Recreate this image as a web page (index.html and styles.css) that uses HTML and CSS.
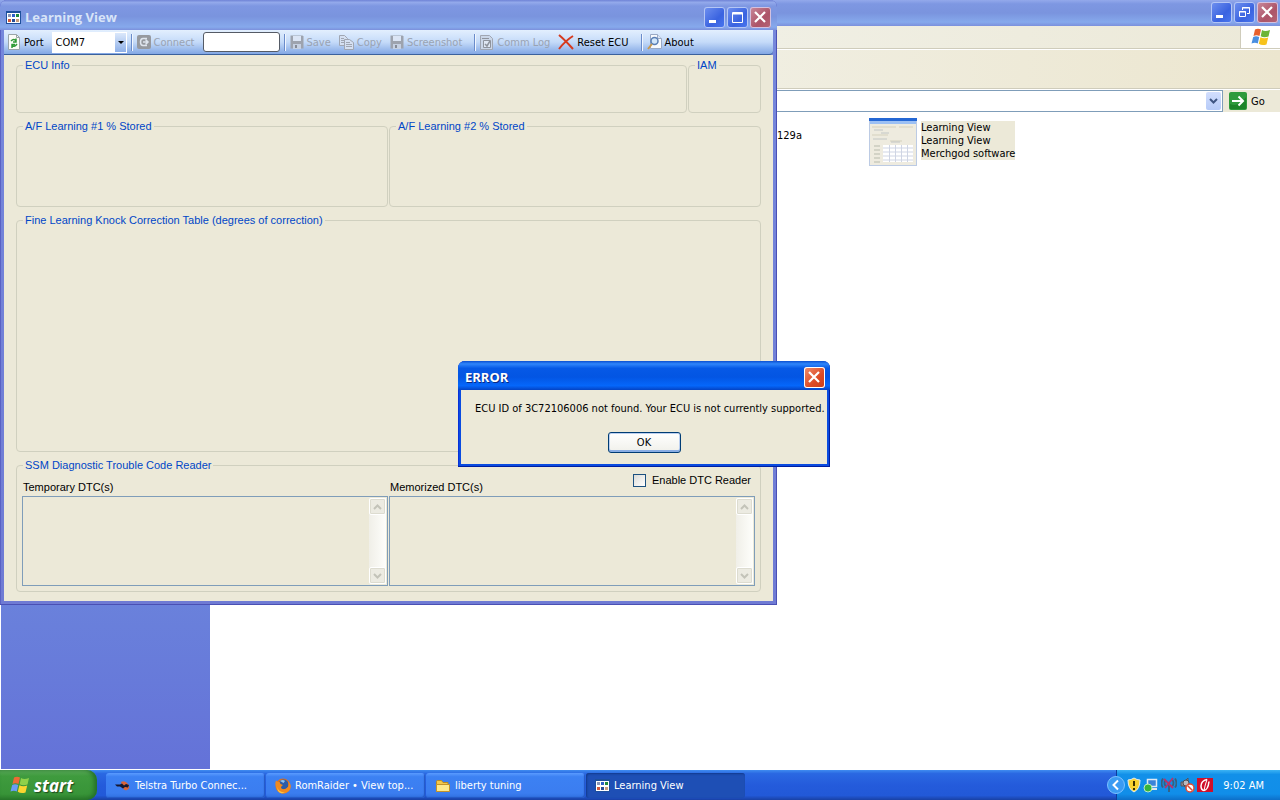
FILE: index.html
```html
<!DOCTYPE html>
<html lang="en">
<head>
  <meta charset="UTF-8">
  <title>Learning View</title>
  <link rel="stylesheet" href="styles.css">
</head>
<body>

  <div class="desktop">

    <!-- explorer window in the back -->
    <div class="explorer">
      <div class="explorer-title">
        <div class="win-buttons">
          <button type="button" class="win-btn" aria-label="Minimize">
            <svg width="21" height="21" viewBox="0 0 21 21"><path d="M5 13h7v3H5z" fill="#fff"/></svg>
          </button>
          <button type="button" class="win-btn" aria-label="Restore">
            <svg width="21" height="21" viewBox="0 0 21 21" fill="none" stroke="#fff"><path d="M8.500 8V5.500h7v6H13M8 6h8"/><path d="M5.500 9.500h6v5h-6zM5 10h7"/></svg>
          </button>
          <button type="button" class="win-btn close-dim" aria-label="Close">
            <svg width="21" height="21" viewBox="0 0 21 21"><path d="M5 5l10 10M15 5L5 15" stroke="#fff" stroke-width="2.200"/></svg>
          </button>
        </div>
      </div>
      <div class="menu-bar">
        <div class="throbber">
          <svg width="20" height="18" viewBox="0 0 20 18">
            <path d="M4 1.500Q7 0 10 1.500L8.500 8Q5.500 6.500 2.500 8z" fill="#e8602c"/>
            <path d="M11 2Q14 4 19 2L17.500 8.500Q13 10 9.700 8.200z" fill="#6bb536"/>
            <path d="M2.200 9Q5 7.500 8.200 9L6.800 15.500Q4 14 .5 15.500z" fill="#4a8fe0"/>
            <path d="M9.400 9.300Q13 11 17.200 9.600L15.500 16.500Q11 18 7.800 15.800z" fill="#f7c31c"/>
          </svg>
        </div>
      </div>
      <div class="tool-bar"></div>
      <div class="address-bar">
        <div class="address-field">
          <input type="text" class="address-input" aria-label="Address">
          <button type="button" class="address-drop" aria-label="Show addresses">
            <svg width="9" height="6" viewBox="0 0 9 6"><path d="M1 1l3.500 3.500L8 1" fill="none" stroke="#3f5683" stroke-width="2"/></svg>
          </button>
        </div>
        <button type="button" class="go-btn">
          <svg width="18" height="18" viewBox="0 0 18 18"><rect width="18" height="18" rx="2" fill="#2f9a3c"/><path d="M1 17V12Q9 16 17 5v12z" fill="#1d8429"/><path d="M3 9h11M9.500 4.500L14 9l-4.500 4.500" fill="none" stroke="#fff" stroke-width="2"/></svg>
          Go
        </button>
      </div>
      <div class="explorer-body">
        <div class="task-pane"></div>
        <div class="files">
          <p class="file-name">129a</p>
          <a href="#" class="file-tile">
            <svg width="48" height="48" viewBox="0 0 48 48">
              <rect width="48" height="48" fill="#bccbe4"/>
              <rect x="1" y="3" width="46" height="44" fill="#eeebdf"/>
              <rect width="48" height="3" fill="#2467d4"/>
              <rect x="1" y="3" width="46" height="3" fill="#9cc0f4"/>
              <path d="M3 9h24M30 9h14M3 17h16M21 23h12" stroke="#d5d1bd"/>
              <path d="M5 12h9M12 15h8M4 21h14M22 24h9" stroke="#c2c6c5"/>
              <rect x="14" y="27" width="30" height="17" fill="#fff"/>
              <path d="M14 30h30M14 34h30M14 38h30M14 42h30M20.500 27v17M26.500 27v17M32.500 27v17M38.500 27v17" stroke="#cfd5e4"/>
              <path d="M5 28h6M5 32h6M5 36h6M5 40h6M5 44h6" stroke="#d3d3c6" stroke-width="2"/>
            </svg>
            <span class="file-text">Learning View<br>Learning View<br>Merchgod software</span>
          </a>
        </div>
      </div>
    </div>

    <!-- taskbar -->
    <div class="taskbar">
      <button type="button" class="start-btn">
        <svg width="20" height="18" viewBox="0 0 20 18">
          <path d="M4 1.500Q7 0 10 1.500L8.500 8Q5.500 6.500 2.500 8z" fill="#ee6a35"/>
          <path d="M11 2Q14 4 19 2L17.500 8.500Q13 10 9.700 8.200z" fill="#8fd14a"/>
          <path d="M2.200 9Q5 7.500 8.200 9L6.800 15.500Q4 14 .5 15.500z" fill="#6a9cf5"/>
          <path d="M9.400 9.300Q13 11 17.200 9.600L15.500 16.500Q11 18 7.800 15.800z" fill="#fbd530"/>
        </svg>
        start
      </button>
      <div class="tasks">
        <button type="button" class="task">
          <svg width="16" height="16" viewBox="0 0 16 16"><path d="M6 4Q10 2 13 6T12 12Q9 13 8 10z" fill="#d9653a"/><path d="M0 6.500h5l2-1 2 2 2-1.500 3 1-1 2.500-3-.5-2 1.500-3-2H2z" fill="#16172e"/></svg>
          Telstra Turbo Connec...
        </button>
        <button type="button" class="task">
          <svg width="16" height="16" viewBox="0 0 16 16"><circle cx="8" cy="8" r="7.500" fill="#e0701c"/><circle cx="8.500" cy="6.500" r="5" fill="#2c5ca8"/><path d="M5 3q3-2 5 0L8.500 5z" fill="#8fc3ee"/><path d="M1 2.500Q2 4 5 4q-1 2 3 3-2 1-2 3 3 3 7-1 1-3 0-6 5 5 1 10-6 5-11 0-4-5-2-10.500z" fill="#ef8a20"/><path d="M2 9q2 6 8 5-4 3-7-1z" fill="#fcc544"/></svg>
          RomRaider • View top...
        </button>
        <button type="button" class="task">
          <svg width="16" height="16" viewBox="0 0 16 16"><path d="M1.500 13.500v-10q0-1 1-1h4l1.500 2h5v9z" fill="#f2c84b" stroke="#b98a22"/><path d="M1.500 13.500v-7h13v7z" fill="#fde98c" stroke="#c1922b"/></svg>
          liberty tuning
        </button>
        <button type="button" class="task active">
          <svg width="15" height="13" viewBox="0 0 15 13"><path d="M0 0h15v13H0z" fill="#1d4f9c"/><path d="M1 2h13v10H1z" fill="#fff"/><path d="M2 3h3v3H2z" fill="#8a96b8"/><path d="M6 3h3v3H6z" fill="#2e5fc8"/><path d="M10 3h3v3h-3z" fill="#1e8a3c"/><path d="M2 8h3v3H2z" fill="#d0583c"/><path d="M6 8h3v3H6z" fill="#274b94"/><path d="M10 8h3v3h-3z" fill="#c79c7c"/></svg>
          Learning View
        </button>
      </div>
      <div class="tray">
        <button type="button" class="tray-toggle" aria-label="Show hidden icons">
          <svg width="18" height="18" viewBox="0 0 18 18"><circle cx="9" cy="9" r="8.500" fill="#3a9bf3" stroke="#7cc2ff"/><path d="M11 4.500L6.500 9l4.500 4.500" fill="none" stroke="#fff" stroke-width="2"/></svg>
        </button>
        <svg width="14" height="16" viewBox="0 0 14 16"><path d="M7 1q3 2 6 2 0 9-6 12Q1 12 1 3q3 0 6-2z" fill="#f8d230" stroke="#e8edf0"/><path d="M7 4v5M7 11v2" stroke="#3a3000" stroke-width="2"/></svg>
        <svg width="16" height="16" viewBox="0 0 16 16"><rect x="4.500" y="2.500" width="9" height="7" fill="#3b83d8" stroke="#dfe9f5" stroke-width="1.500"/><path d="M8 12h6" stroke="#e3e6ea" stroke-width="2"/><circle cx="5" cy="11" r="4" fill="#37b43c" stroke="#bcebbd"/></svg>
        <svg width="16" height="16" viewBox="0 0 16 16" fill="none"><path d="M8 6v9M4.500 3q-2 3 0 6M11.500 3q2 3 0 6M2 1.500q-3 5 0 9M14 1.500q3 5 0 9" stroke="#3a5f7c" stroke-width="1.800"/><path d="M3 2l9 9M12 1L4 11" stroke="#b8326a" stroke-width="1.800"/></svg>
        <svg width="16" height="16" viewBox="0 0 16 16"><path d="M2 5h3l4-4v11L5 9H2z" fill="#8c8c94" stroke="#545460"/><circle cx="7" cy="6" r="3" fill="#bababf" stroke="#4d4d52"/><circle cx="11" cy="11" r="4" fill="#fff" stroke="#de4a34" stroke-width="1.500"/><path d="M8.500 8.500l5 5" stroke="#de4a34" stroke-width="1.500"/></svg>
        <svg width="16" height="14" viewBox="0 0 16 14"><rect width="16" height="14" fill="#d00f2a"/><path d="M10 1.500Q4 3 4 8q0 4 3 4.500Q11 12 12 3.500" fill="none" stroke="#fff" stroke-width="1.500"/><path d="M10 1.500Q8 7 7 12.500" fill="none" stroke="#fff"/></svg>
        <span class="clock">9:02 AM</span>
      </div>
    </div>

    <!-- main application window -->
    <div class="app-window">
      <div class="app-title">
        <svg width="15" height="13" viewBox="0 0 15 13"><path d="M0 0h15v13H0z" fill="#1d4f9c"/><path d="M1 2h13v10H1z" fill="#fff"/><path d="M2 3h3v3H2z" fill="#8a96b8"/><path d="M6 3h3v3H6z" fill="#2e5fc8"/><path d="M10 3h3v3h-3z" fill="#1e8a3c"/><path d="M2 8h3v3H2z" fill="#d0583c"/><path d="M6 8h3v3H6z" fill="#274b94"/><path d="M10 8h3v3h-3z" fill="#c79c7c"/></svg>
        <h1 class="app-name">Learning View</h1>
        <div class="win-buttons">
          <button type="button" class="win-btn" aria-label="Minimize">
            <svg width="21" height="21" viewBox="0 0 21 21"><path d="M5 13h7v3H5z" fill="#fff"/></svg>
          </button>
          <button type="button" class="win-btn" aria-label="Maximize">
            <svg width="21" height="21" viewBox="0 0 21 21" fill="none" stroke="#fff"><path d="M5.500 5.500h10v10h-10zM5 6.500h11M5 7h11"/></svg>
          </button>
          <button type="button" class="win-btn close-dim" aria-label="Close">
            <svg width="21" height="21" viewBox="0 0 21 21"><path d="M5 5l10 10M15 5L5 15" stroke="#fff" stroke-width="2.200"/></svg>
          </button>
        </div>
      </div>

      <div class="strip">
        <label class="strip-item" for="port">
          <svg width="14" height="16" viewBox="0 0 14 16"><path d="M1.500.5h8l3 3v12h-11z" fill="#fbfcf8" stroke="#9aa5a8"/><path d="M9.500.5v3h3" fill="none" stroke="#9aa5a8"/><path d="M4 7q3-3 5 0M9 4.500V8H6M10 10q-3 4-5 1M5 14v-3.500h3" fill="none" stroke="#2e9a35" stroke-width="1.500"/></svg>
          Port
        </label>
        <div class="combo">
          <select id="port" class="combo-select">
            <option>COM7</option>
          </select>
          <span class="combo-arrow"></span>
        </div>
        <span class="sep"></span>
        <button type="button" class="strip-item" disabled>
          <svg width="14" height="14" viewBox="0 0 14 14"><rect width="14" height="14" rx="2" fill="#96999f"/><path d="M10 3.500H6Q3.500 3.500 3.500 7T6 10.500h4" fill="none" stroke="#dfe5ee" stroke-width="1.500"/><path d="M6 7h4M8.500 4.500L11 7 8.500 9.500" fill="none" stroke="#dfe5ee" stroke-width="1.500"/></svg>
          Connect
        </button>
        <input type="text" class="strip-input" aria-label="Connection status">
        <span class="sep"></span>
        <button type="button" class="strip-item" disabled>
          <svg width="14" height="14" viewBox="0 0 14 14"><path d="M.5.5h12l1 1v12H.5z" fill="#9da3ae"/><path d="M3 1h8v5H3z" fill="#dbe5f5"/><path d="M3 9h8v5H3z" fill="#c5d0e2"/><path d="M5 10h2v3H5z" fill="#858b96"/></svg>
          Save
        </button>
        <button type="button" class="strip-item" disabled>
          <svg width="15" height="15" viewBox="0 0 15 15"><path d="M.5.5h5l3 3v7h-8z" fill="#d5e0f2" stroke="#a0a6b2"/><path d="M5.500 4.500h5l4 3v7h-9z" fill="#d5e0f2" stroke="#a0a6b2"/><path d="M2 3.500h3M2 5.500h3M2 7.500h3M7 7.500h4M7 9.500h6M7 11.500h6" stroke="#a0a6b2"/></svg>
          Copy
        </button>
        <button type="button" class="strip-item" disabled>
          <svg width="14" height="14" viewBox="0 0 14 14"><path d="M.5.5h12l1 1v12H.5z" fill="#9da3ae"/><path d="M3 1h8v5H3z" fill="#dbe5f5"/><path d="M3 9h8v5H3z" fill="#c5d0e2"/><path d="M5 10h2v3H5z" fill="#858b96"/></svg>
          Screenshot
        </button>
        <span class="sep"></span>
        <button type="button" class="strip-item" disabled>
          <svg width="14" height="15" viewBox="0 0 14 15"><path d="M.5.5h9l3 3v11H.5z" fill="#cad6e8" stroke="#a0a6b2"/><path d="M3.500 5.500h7v7h-7z" fill="#dfe7f3" stroke="#8e939d"/><path d="M5 9l2 2 3-5" fill="none" stroke="#8e939d" stroke-width="1.500"/><path d="M2 3.500h7" stroke="#8e939d"/></svg>
          Comm Log
        </button>
        <button type="button" class="strip-item">
          <svg width="16" height="16" viewBox="0 0 16 16"><path d="M1 1q6 5 14 14M15 2Q7 7 1 15" fill="none" stroke="#d63a1e" stroke-width="2"/></svg>
          Reset ECU
        </button>
        <span class="sep"></span>
        <button type="button" class="strip-item">
          <svg width="15" height="16" viewBox="0 0 15 16"><path d="M3.500.5h7l4 4v10h-11z" fill="#f8fafd" stroke="#9aa9c4"/><path d="M10.500.5v4h4" fill="#dce6f6" stroke="#9aa9c4"/><circle cx="7.500" cy="7" r="3.500" fill="#d2e6fa" stroke="#5a7fb5" stroke-width="1.500"/><path d="M5 10l-4 5" stroke="#c9994c" stroke-width="2"/></svg>
          About
        </button>
      </div>

      <div class="panels">
        <div class="panel-row info-row">
          <fieldset class="group short">
            <legend>ECU Info</legend>
          </fieldset>
          <fieldset class="group short">
            <legend>IAM</legend>
          </fieldset>
        </div>
        <div class="panel-row">
          <fieldset class="group medium">
            <legend>A/F Learning #1 % Stored</legend>
          </fieldset>
          <fieldset class="group medium">
            <legend>A/F Learning #2 % Stored</legend>
          </fieldset>
        </div>
        <fieldset class="group tall">
          <legend>Fine Learning Knock Correction Table (degrees of correction)</legend>
        </fieldset>
        <fieldset class="group">
          <legend>SSM Diagnostic Trouble Code Reader</legend>
          <div class="dtc-grid">
            <div class="dtc-head">
              <label class="dtc-label" for="temporary">Temporary DTC(s)</label>
            </div>
            <div class="dtc-head">
              <label class="dtc-label" for="memorized">Memorized DTC(s)</label>
              <label class="dtc-check"><input type="checkbox" class="tick"> Enable DTC Reader</label>
            </div>
            <div class="list-box">
              <textarea id="temporary" class="list-text" readonly></textarea>
              <div class="scroll">
                <button type="button" class="scroll-btn" aria-label="Scroll up" disabled><svg width="9" height="6" viewBox="0 0 9 6"><path d="M1 5l3.500-3.500L8 5" fill="none" stroke="#c3c3b9" stroke-width="2"/></svg></button>
                <button type="button" class="scroll-btn" aria-label="Scroll down" disabled><svg width="9" height="6" viewBox="0 0 9 6"><path d="M1 1l3.500 3.500L8 1" fill="none" stroke="#c3c3b9" stroke-width="2"/></svg></button>
              </div>
            </div>
            <div class="list-box">
              <textarea id="memorized" class="list-text" readonly></textarea>
              <div class="scroll">
                <button type="button" class="scroll-btn" aria-label="Scroll up" disabled><svg width="9" height="6" viewBox="0 0 9 6"><path d="M1 5l3.500-3.500L8 5" fill="none" stroke="#c3c3b9" stroke-width="2"/></svg></button>
                <button type="button" class="scroll-btn" aria-label="Scroll down" disabled><svg width="9" height="6" viewBox="0 0 9 6"><path d="M1 1l3.500 3.500L8 1" fill="none" stroke="#c3c3b9" stroke-width="2"/></svg></button>
              </div>
            </div>
          </div>
        </fieldset>
      </div>
    </div>

    <!-- error message -->
    <div class="dialog" role="alertdialog" aria-labelledby="dialogTitle">
      <div class="dialog-title">
        <h2 id="dialogTitle" class="dialog-name">ERROR</h2>
        <button type="button" class="win-btn close-red" aria-label="Close">
          <svg width="21" height="21" viewBox="0 0 21 21"><path d="M5 5l10 10M15 5L5 15" stroke="#fff" stroke-width="2.200"/></svg>
        </button>
      </div>
      <div class="dialog-body">
        <p class="dialog-text">ECU ID of 3C72106006 not found. Your ECU is not currently supported.</p>
        <button type="button" class="ok-btn">OK</button>
      </div>
    </div>

  </div>

</body>
</html>
```

FILE: styles.css
```css
* {
  margin: 0;
  padding: 0;
  box-sizing: border-box;
}

body {
  font-family: "DejaVu Sans Condensed", "DejaVu Sans", sans-serif;
  font-size: 11px;
  line-height: 13px;
  color: #000;
}

button,
input,
select,
textarea {
  font: inherit;
  color: inherit;
}

button {
  border: none;
  background: none;
}

svg {
  display: block;
  flex: none;
}

.desktop {
  position: relative;
  min-height: 100vh;
  display: flex;
  flex-direction: column;
  overflow: hidden;
}

/* window buttons */
.win-buttons {
  display: flex;
  gap: 2px;
  margin-left: auto;
}

.win-btn {
  width: 21px;
  height: 21px;
  border-radius: 3px;
  background: linear-gradient(135deg, #7192f0, #3a63e0 60%, #4a78f0);
  box-shadow: inset 0 0 0 1px #b4c6f5;
  flex: none;
}

.close-dim {
  background: linear-gradient(135deg, #c98a9c, #ad5468 60%, #b56576);
  box-shadow: inset 0 0 0 1px #d3c1e0;
}

.close-red {
  background: linear-gradient(135deg, #f0906f, #dd4a25 60%, #c93e18);
  box-shadow: inset 0 0 0 1px #fff;
}

/* explorer */
.explorer {
  flex: 1;
  display: flex;
  flex-direction: column;
  background: #ece9d8;
}

.explorer-title {
  height: 26px;
  padding: 2px 2px 0 0;
  display: flex;
  background: linear-gradient(#93a9eb, #7e97e2 15%, #7a94de 50%, #86a9ec 85%, #7b90dc);
}

.menu-bar {
  height: 23px;
  display: flex;
  justify-content: flex-end;
  background: linear-gradient(to right, #efede0, #f0efe4 60%, #ece9d8);
  border-bottom: 1px solid #cfccbb;
}

.throbber {
  width: 40px;
  display: flex;
  justify-content: center;
  align-items: center;
  background: #fff;
  border-left: 1px solid #cfccbb;
}

.tool-bar {
  height: 40px;
  background: linear-gradient(to right, #f2f1e8, #f0eee1 60%, #ece6cf);
  border-top: 1px solid #fff;
  border-bottom: 1px solid #cfccbb;
}

.address-bar {
  height: 23px;
  display: flex;
  border-top: 1px solid #fff;
}

.address-field {
  flex: 1;
  display: flex;
  background: #fff;
  border: 1px solid #7f9db9;
  padding: 1px;
}

.address-input {
  flex: 1;
  border: none;
  outline: none;
}

.address-drop {
  width: 15px;
  display: flex;
  justify-content: center;
  align-items: center;
  border-radius: 2px;
  background: linear-gradient(#d2defd, #b6cbf8);
}

.go-btn {
  width: 57px;
  padding-left: 6px;
  display: flex;
  align-items: center;
  gap: 4px;
}

.explorer-body {
  flex: 1;
  display: flex;
  background: #fff;
  padding: 0 0 1px 1px;
}

.task-pane {
  width: 209px;
  background: linear-gradient(#7ba2e7, #6b84dc 70%, #6472d8);
}

.files {
  display: flex;
  padding: 6px 0 0 567px;
}

.file-name {
  width: 92px;
  padding-top: 11px;
}

.file-tile {
  display: flex;
  align-items: flex-start;
  gap: 4px;
  color: #000;
  text-decoration: none;
}

.file-text {
  margin-top: 3px;
  background: #ece9d8;
}

/* taskbar */
.taskbar {
  height: 30px;
  display: flex;
  color: #fff;
  background: linear-gradient(#3f8cf0, #2a68e2 12%, #245bdb 50%, #2259d8 85%, #1941a5);
}

.start-btn {
  width: 97px;
  padding-left: 10px;
  display: flex;
  align-items: center;
  gap: 4px;
  color: #fff;
  font: italic bold 17px "Open Sans", sans-serif;
  text-shadow: 1px 1px 1px #1d4a1c;
  background: linear-gradient(#5eac5c, #3f9b3e 20%, #389438 80%, #2a7a2a);
  border-radius: 0 10px 10px 0;
  box-shadow: inset -3px 0 4px #24702a;
}

.tasks {
  flex: 1;
  display: flex;
  gap: 1px;
  padding: 3px 0 2px 9px;
}

.task {
  width: 159px;
  padding: 0 9px;
  display: flex;
  align-items: center;
  gap: 4px;
  white-space: nowrap;
  color: #fff;
  border-radius: 3px;
  background: linear-gradient(#5a9bff, #3c81f3 15%, #3b7df0 80%, #3070e0);
  box-shadow: inset -1px -1px 1px #2458c4;
}

.task.active {
  background: #1e4fb5;
  box-shadow: inset 1px 1px 2px #123a8c;
}

.tray {
  display: flex;
  align-items: center;
  gap: 2px;
  padding-right: 16px;
  background: linear-gradient(#3cb3f4, #1290e9 15%, #118ee9 80%, #0d6fc8);
  border-left: 1px solid #0e3c9c;
}

.tray-toggle {
  margin-left: -10px;
}

.clock {
  margin-left: 8px;
}

/* application window */
.app-window {
  position: absolute;
  left: 0;
  top: 0;
  width: 777px;
  padding: 0 4px 4px;
  border-radius: 7px 7px 0 0;
  background: linear-gradient(#7688dc, #6f7bd4);
  box-shadow: inset -1px -1px 0 #4a50b4, inset 1px 0 0 #5a62c4;
}

.app-title {
  height: 30px;
  margin: 0 -4px;
  padding: 4px 6px 0;
  display: flex;
  align-items: center;
  gap: 4px;
  border-radius: 7px 7px 0 0;
  background: linear-gradient(#6f83d6, #93a9eb 8%, #7e97e2 20%, #7a94de 55%, #86a9ec 90%, #7b90dc);
}

.app-name,
.dialog-name {
  font: bold 13px/16px "Open Sans", sans-serif;
}

.app-name {
  color: #d8e4f8;
}

.strip {
  height: 25px;
  padding: 0 3px;
  display: flex;
  align-items: center;
  background: linear-gradient(#e3effe, #c5dbf9 50%, #82a7e4);
  border-bottom: 1px solid #3b619c;
  border-radius: 0 0 4px 0;
}

.strip-item {
  display: flex;
  align-items: center;
  gap: 3px;
  padding-right: 8px;
  white-space: nowrap;
}

.strip-item:disabled {
  color: #9aa3b2;
}

.combo {
  position: relative;
  width: 75px;
  height: 21px;
}

.combo-select {
  appearance: none;
  width: 100%;
  height: 100%;
  padding-left: 4px;
  border: none;
  border-radius: 0;
  background: #fff;
}

.combo-arrow {
  position: absolute;
  top: 1px;
  right: 1px;
  width: 11px;
  height: 19px;
  background: linear-gradient(#dbe8fb, #8eb0e8);
  pointer-events: none;
}

.combo-arrow::after {
  content: "";
  position: absolute;
  top: 8px;
  left: 3px;
  border: 3px solid transparent;
  border-top-color: #000;
  border-bottom: none;
}

.sep {
  width: 2px;
  height: 17px;
  margin: 0 4px;
  background: linear-gradient(to right, #6a8ccb 50%, #f1f6fe 50%);
}

.strip-input {
  width: 77px;
  height: 20px;
  padding: 0 4px;
  border: 1px solid #555b66;
  border-radius: 3px;
  background: #fff;
}

/* group boxes */
.panels {
  padding: 3px 12px 9px;
  display: flex;
  flex-direction: column;
  gap: 6px;
  background: #ece9d8;
  font-family: "Liberation Sans", Arial, sans-serif;
}

.panel-row {
  display: grid;
  grid-template-columns: 1fr 1fr;
  gap: 1px;
}

.info-row {
  grid-template-columns: 1fr 73px;
}

.group {
  min-width: 0;
  border: 1px solid #d0d0bf;
  border-radius: 4px;
}

.group legend {
  margin-left: 6px;
  padding: 0 2px;
  line-height: 14px;
  color: #0046c7;
}

.short {
  min-height: 55px;
}

.medium {
  min-height: 88px;
}

.tall {
  min-height: 239px;
}

.dtc-grid {
  padding: 0 5px 5px;
  display: grid;
  grid-template-columns: 1fr 1fr;
  column-gap: 1px;
}

.dtc-head {
  height: 24px;
  display: flex;
  justify-content: space-between;
}

.dtc-label {
  align-self: flex-end;
  padding: 0 0 2px 1px;
}

.dtc-check {
  height: 16px;
  margin-right: 4px;
  display: flex;
  align-items: center;
  gap: 6px;
}

.tick {
  appearance: none;
  width: 13px;
  height: 13px;
  border: 1px solid #1c5180;
  background: linear-gradient(135deg, #dcdcd7, #fff);
}

.tick:checked {
  background: #21a121;
}

.list-box {
  height: 90px;
  display: flex;
  border: 1px solid #7f9db9;
}

.list-text {
  flex: 1;
  min-width: 0;
  border: none;
  outline: none;
  resize: none;
  background: transparent;
}

.scroll {
  width: 17px;
  margin: 1px;
  display: flex;
  flex-direction: column;
  justify-content: space-between;
  background: linear-gradient(to right, #f0efe8, #fefefb);
}

.scroll-btn {
  height: 17px;
  display: flex;
  justify-content: center;
  align-items: center;
  border: 1px solid #fff;
  border-radius: 2px;
  background: #ecebe2;
  box-shadow: inset 0 0 0 1px #dddcd0;
}

/* error dialog */
.dialog {
  position: absolute;
  left: 458px;
  top: 361px;
  width: 372px;
  padding: 0 3px 3px;
  border-radius: 7px 7px 0 0;
  background: #0a4be0;
  box-shadow: inset -1px -1px 0 #001ea0, inset 1px 0 0 #0831d9;
}

.dialog-title {
  height: 29px;
  margin: 0 -3px;
  padding: 3px 5px 0 7px;
  display: flex;
  justify-content: space-between;
  align-items: center;
  border-radius: 7px 7px 0 0;
  background: linear-gradient(#0b4fd0, #2f86fb 10%, #0659e6 25%, #0355e3 55%, #0567fb 85%, #0443c4);
}

.dialog-name {
  color: #fff;
  text-shadow: 1px 1px 0 #0a2a82;
}

.dialog-body {
  padding: 12px 0 11px;
  display: flex;
  flex-direction: column;
  align-items: center;
  gap: 17px;
  background: #ece9d8;
}

.dialog-text {
  align-self: flex-start;
  padding-left: 14px;
  white-space: nowrap;
}

.ok-btn {
  width: 73px;
  height: 21px;
  border: 1px solid #003c74;
  border-radius: 3px;
  background: linear-gradient(#fff, #f0f0ea);
  box-shadow: inset 0 -2px 0 #89ade4, inset 0 0 0 1px #bcd0f0;
}
```
